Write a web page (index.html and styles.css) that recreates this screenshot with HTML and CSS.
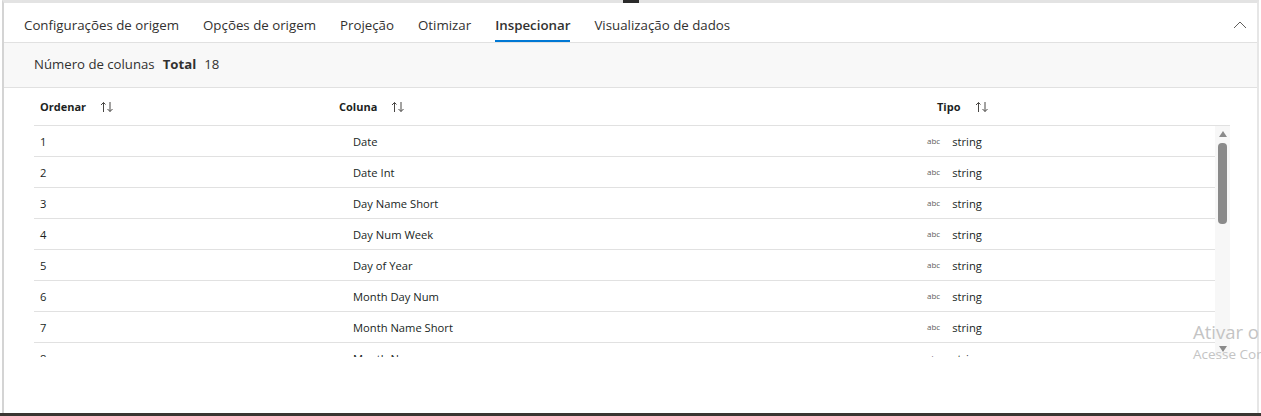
FILE: index.html
```html
<!DOCTYPE html>
<html lang="pt">
<head>
<meta charset="utf-8">
<title>Inspecionar</title>
<link rel="stylesheet" href="styles.css">
</head>
<body>
<div class="page">
  <div class="topmark"></div>
  <div class="frame">
    <div class="tabs">
      <div class="tab">Configurações de origem</div>
      <div class="tab">Opções de origem</div>
      <div class="tab">Projeção</div>
      <div class="tab">Otimizar</div>
      <div class="tab active">Inspecionar</div>
      <div class="tab">Visualização de dados</div>
      <div class="spacer"></div>
      <svg class="chev" width="14" height="8" viewBox="0 0 14 8"><path d="M1 7 L7 1 L13 7" fill="none" stroke="#605e5c" stroke-width="1"/></svg>
    </div>
    <div class="summary">
      <span class="sum-label">Número de colunas</span>
      <span class="sum-total">Total</span>
      <span class="sum-val">18</span>
    </div>
    <div class="table">
      <div class="thead">
        <div class="th">Ordenar <svg class="sort" width="14" height="12" viewBox="0 0 14 12"><path d="M3.5 11 V1.5 M3.5 1.5 L1 4 M3.5 1.5 L5.5 3.5 M10 1 V10.5 M10 10.5 L7.5 8 M10 10.5 L12.5 8" fill="none" stroke="#484644" stroke-width="1"/></svg></div>
        <div class="th">Coluna <svg class="sort" width="14" height="12" viewBox="0 0 14 12"><path d="M3.5 11 V1.5 M3.5 1.5 L1 4 M3.5 1.5 L5.5 3.5 M10 1 V10.5 M10 10.5 L7.5 8 M10 10.5 L12.5 8" fill="none" stroke="#484644" stroke-width="1"/></svg></div>
        <div class="th">Tipo <svg class="sort" width="14" height="12" viewBox="0 0 14 12"><path d="M3.5 11 V1.5 M3.5 1.5 L1 4 M3.5 1.5 L5.5 3.5 M10 1 V10.5 M10 10.5 L7.5 8 M10 10.5 L12.5 8" fill="none" stroke="#484644" stroke-width="1"/></svg></div>
      </div>
      <div class="tbody-wrap">
        <div class="tbody">
          <div class="row"><div class="td">1</div><div class="td">Date</div><div class="td"><span class="abc">abc</span>string</div></div>
          <div class="row"><div class="td">2</div><div class="td">Date Int</div><div class="td"><span class="abc">abc</span>string</div></div>
          <div class="row"><div class="td">3</div><div class="td">Day Name Short</div><div class="td"><span class="abc">abc</span>string</div></div>
          <div class="row"><div class="td">4</div><div class="td">Day Num Week</div><div class="td"><span class="abc">abc</span>string</div></div>
          <div class="row"><div class="td">5</div><div class="td">Day of Year</div><div class="td"><span class="abc">abc</span>string</div></div>
          <div class="row"><div class="td">6</div><div class="td">Month Day Num</div><div class="td"><span class="abc">abc</span>string</div></div>
          <div class="row"><div class="td">7</div><div class="td">Month Name Short</div><div class="td"><span class="abc">abc</span>string</div></div>
          <div class="row"><div class="td">8</div><div class="td">Month Num</div><div class="td"><span class="abc">abc</span>string</div></div>
        </div>
        <div class="scrollbar">
          <svg class="sarrow" width="8" height="6" viewBox="0 0 8 6"><path d="M0 6 L4 0 L8 6 Z" fill="#8a8a8a"/></svg>
          <div class="thumb"></div>
          <div class="spacer"></div>
          <svg class="sarrow" width="8" height="6" viewBox="0 0 8 6"><path d="M0 0 L8 0 L4 6 Z" fill="#8a8a8a"/></svg>
        </div>
      </div>
    </div>
  </div>
  <div class="watermark">
    <div class="wm1">Ativar o Windows</div>
    <div class="wm2">Acesse Configurações para ativar o Windows.</div>
  </div>
</div>
</body>
</html>
```
FILE: styles.css
```css
* { box-sizing: border-box; }
html, body { margin: 0; padding: 0; background: #fff; }
body {
  font-family: "Open Sans", "Noto Sans", sans-serif;
  color: #323130;
  width: 1261px;
  height: 416px;
  overflow: hidden;
}
.page {
  position: relative;
  width: 1261px;
  height: 416px;
  overflow: hidden;
  border-bottom: 3px solid #3a3632;
}
.topmark {
  position: absolute;
  left: 623px;
  top: 0;
  width: 16px;
  height: 3px;
  background: #2b2b2b;
}
.frame {
  margin-left: 2px;
  width: 1257px;
  height: 413px;
  border-top: 3px solid #e3e3e3;
  border-left: 2px solid #d4d4d4;
  border-right: 2px solid #e6e6e6;
  display: flex;
  flex-direction: column;
}
.tabs {
  height: 40px;
  display: flex;
  align-items: stretch;
  padding-left: 20px;
  padding-right: 10px;
  border-bottom: 1px solid #e1e1e1;
}
.tab {
  font-size: 13.3px;
  display: flex;
  align-items: center;
  padding-top: 6px;
  margin-right: 24px;
  color: #323130;
  border-bottom: 2px solid transparent;
}
.tab.active {
  font-weight: 600;
  border-bottom-color: #0078d4;
}
.spacer { flex: 1; }
.chev { align-self: center; margin-top: 4px; }
.summary {
  height: 45px;
  background: #f8f8f8;
  border-bottom: 1px solid #e1e1e1;
  display: flex;
  align-items: center;
  padding-left: 30px;
  font-size: 13.2px;
  padding-bottom: 3px;
}
.sum-total { font-weight: 700; margin-left: 8px; }
.sum-val { margin-left: 8px; }
.table {
  margin-left: 30px;
  width: 1196px;
}
.thead {
  height: 38px;
  display: grid;
  grid-template-columns: 299px 598px 1fr;
  border-bottom: 1px solid #e1e1e1;
  align-items: center;
}
.th {
  font-size: 11px;
  font-weight: 700;
  padding-left: 6px;
  display: flex;
  align-items: center;
  color: #201f1e;
}
.sort { margin-left: 14px; }
.tbody-wrap {
  display: flex;
  height: 231px;
  overflow: hidden;
}
.tbody { width: 1181px; }
.row {
  height: 31px;
  border-bottom: 1px solid #e1e1e1;
  display: grid;
  grid-template-columns: 313px 574px 1fr;
  align-items: center;
  font-size: 11.2px;
  color: #201f1e;
}
.td { padding-left: 6px; display: flex; align-items: center; }
.abc {
  font-size: 8px;
  color: #605e5c;
  margin-right: 12px;
  position: relative;
  top: -1px;
}
.scrollbar {
  width: 15px;
  background: #f7f7f7;
  display: flex;
  flex-direction: column;
  align-items: center;
  padding: 5px 0 5px 0;
}
.sarrow { display: block; }
.thumb {
  margin-top: 6px;
  width: 9px;
  height: 81px;
  border-radius: 4px;
  background: #8a8a8a;
}
.watermark {
  position: absolute;
  left: 1193px;
  top: 320px;
  white-space: nowrap;
  color: #c4c4c4;
}
.wm1 { font-size: 18.5px; line-height: 24px; }
.wm2 { font-size: 13.5px; line-height: 20px; }
```
